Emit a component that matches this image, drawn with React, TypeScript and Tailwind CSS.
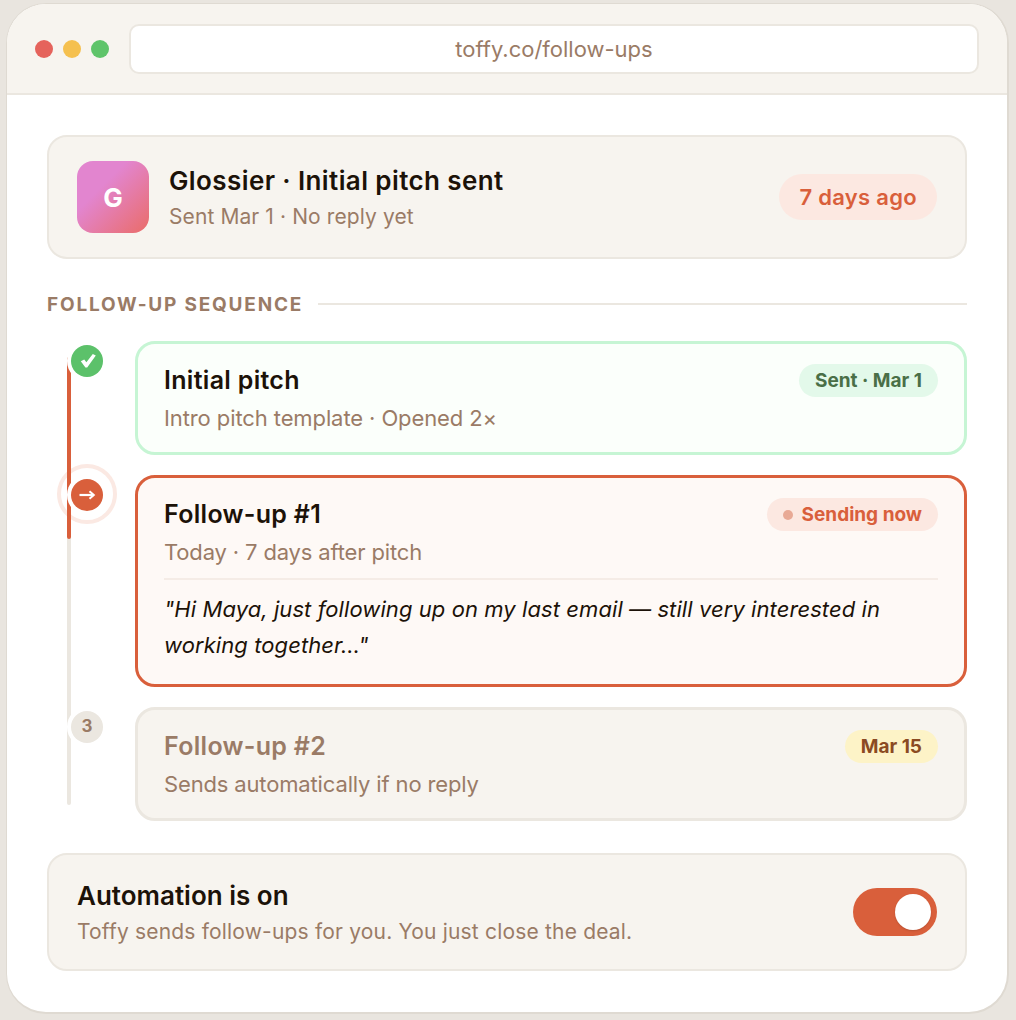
import { ReactNode } from 'react';

function Pill({ className, children }: { className: string; children: ReactNode }) {
    return (
        <span className={`flex h-[33px] items-center rounded-full px-4 text-[19px] font-bold leading-none ${className}`}>
            {children}
        </span>
    );
}

export default function App() {
    return (
        <div className="h-[1020px] overflow-hidden bg-[#e9e5df] pt-[3px] pr-[7px] pl-[6px] font-['Inter',sans-serif]">
            {/* Browser window */}
            <div className="h-[1011px] overflow-hidden rounded-[40px] border border-r-2 border-b-2 border-[#dfdad2] bg-white">
                <div className="flex items-center gap-5 border-b-2 border-[#ebe7e0] bg-[#f7f4ef] pt-5 pr-7 pb-[19px] pl-7">
                    <div className="flex items-center gap-[10px]">
                        <span className="h-[18px] w-[18px] rounded-full bg-[#e5635c]" />
                        <span className="h-[18px] w-[18px] rounded-full bg-[#f5c04f]" />
                        <span className="h-[18px] w-[18px] rounded-full bg-[#5fc46a]" />
                    </div>
                    <div className="flex h-[50px] flex-1 items-center justify-center rounded-[10px] border-2 border-[#ebe7e0] bg-white text-[22px] text-[#9a7b66]">
                        toffy.co/follow-ups
                    </div>
                </div>

                <div className="px-10 pt-10">
                    {/* Pitch summary */}
                    <div className="flex h-[124px] items-center rounded-[20px] border-2 border-[#ebe7e0] bg-[#f7f4ef] pr-7 pl-7">
                        <div className="flex h-[72px] w-[72px] items-center justify-center rounded-2xl bg-[linear-gradient(135deg,#e285cf_35%,#ea6c68)] text-[26px] font-bold text-white">
                            G
                        </div>
                        <div className="ml-5 flex-1 pt-1">
                            <div className="text-[26px] leading-[36px] font-semibold tracking-[0.4px] text-[#1c1208]">Glossier · Initial pitch sent</div>
                            <div className="text-[21px] leading-[36px] tracking-[0.1px] text-[#9a7b66]">Sent Mar 1 · No reply yet</div>
                        </div>
                        <span className="flex h-[46px] items-center rounded-full bg-[#fce8e1] px-5 text-[22px] font-semibold tracking-[0.3px] text-[#d95f3b]">
                            7 days ago
                        </span>
                    </div>

                    {/* Section label */}
                    <div className="mt-[33px] mb-[25px] flex h-6 items-center gap-[15px]">
                        <span className="pt-[2px] text-[19px] font-bold tracking-[1.8px] text-[#9a7b66]">FOLLOW-UP SEQUENCE</span>
                        <div className="h-[2px] flex-1 bg-[#ebe7e0]" />
                    </div>

                    {/* Timeline */}
                    <div className="relative flex flex-col gap-5 pl-[88px]">
                        <div className="absolute top-[123px] left-[10px] h-[60px] w-[60px] rounded-full border-4 border-[#fbe9e3]" />
                        <div className="absolute top-4 bottom-4 left-5 w-1 rounded-full bg-[#ebe7e0]" />
                        <div className="absolute top-4 left-5 h-[182px] w-1 rounded-full bg-[#d95f3b]" />

                        <div className="relative h-[114px] rounded-[20px] border-[3px] border-[#c6f5d4] bg-[#fbfffb] pt-[18px] pr-[26px] pl-[26px]">
                            <span className="absolute top-[1px] left-[-67px] h-8 w-8 rounded-full bg-[#5cc16a] shadow-[0_0_0_4px_#fff]">
                                <svg width="32" height="32" viewBox="0 0 32 32" fill="#fff">
                                    <path d="M9.8 16.2 L13.2 14.4 L15.4 17.2 L21.8 9 L24.8 10.6 L16.2 22.6 L14.4 22.6 Z" />
                                </svg>
                            </span>
                            <div className="flex items-center justify-between">
                                <span className="text-[25px] font-semibold tracking-[0.3px] text-[#1c1208]">Initial pitch</span>
                                <Pill className="bg-[#e3f9ea] text-[#4a6f47]">Sent · Mar 1</Pill>
                            </div>
                            <div className="mt-[3px] text-[22px] leading-[30px] tracking-[-0.1px] text-[#9a7b66]">Intro pitch template · Opened 2×</div>
                        </div>

                        <div className="relative h-[212px] rounded-[20px] border-[3px] border-[#d95f3b] bg-[#fef9f6] pt-[18px] pr-[26px] pl-[26px]">
                            <span className="absolute top-[1px] left-[-67px] h-8 w-8 rounded-full bg-[#d95f3b] shadow-[0_0_0_4px_#fff]">
                                <svg width="32" height="32" viewBox="0 0 32 32" fill="none" stroke="#fff" strokeWidth="2.2">
                                    <path d="M8.5 16 H22.5" />
                                    <path d="M18.5 12.2 L22.8 16 L18.5 19.8" strokeWidth="2" />
                                </svg>
                            </span>
                            <div className="flex items-center justify-between">
                                <span className="text-[25px] font-semibold tracking-[0.3px] text-[#1c1208]">Follow-up #1</span>
                                <Pill className="gap-[9px] bg-[#fce8e1] text-[#d95f3b]">
                                    <span className="h-[10px] w-[10px] rounded-full bg-[#e8a995]" />
                                    Sending now
                                </Pill>
                            </div>
                            <div className="mt-[3px] text-[22px] leading-[30px] tracking-[-0.15px] text-[#9a7b66]">Today · 7 days after pitch</div>
                            <div className="mt-[11px] border-t-2 border-[#f5ece6] pt-[11px] text-[22px] leading-[36px] tracking-[0.08px] italic text-[#1c1208]">
                                "Hi Maya, just following up on my last email — still very interested in<br />working together…"
                            </div>
                        </div>

                        <div className="relative h-[114px] rounded-[20px] border-[3px] border-[#ebe7e0] bg-[#f7f4ef] pt-[18px] pr-[26px] pl-[26px]">
                            <span className="absolute top-[1px] left-[-67px] flex h-8 w-8 items-center justify-center rounded-full bg-[#ebe7e0] text-[17px] font-bold text-[#9a7b66] shadow-[0_0_0_4px_#fff]">
                                3
                            </span>
                            <div className="flex items-center justify-between">
                                <span className="text-[25px] font-semibold tracking-[0.3px] text-[#9a7b66]">Follow-up #2</span>
                                <Pill className="bg-[#fdf3c7] text-[#8b4a22]">Mar 15</Pill>
                            </div>
                            <div className="mt-[3px] text-[22px] leading-[30px] tracking-[-0.15px] text-[#9a7b66]">Sends automatically if no reply</div>
                        </div>
                    </div>

                    {/* Automation */}
                    <div className="mt-8 flex h-[118px] items-center justify-between rounded-[20px] border-2 border-[#ebe7e0] bg-[#f7f4ef] pr-7 pl-7">
                        <div className="pt-1">
                            <div className="text-[26px] leading-[36px] font-semibold text-[#1c1208]">Automation is on</div>
                            <div className="text-[21px] leading-[36px] tracking-[0.18px] text-[#9a7b66]">Toffy sends follow-ups for you. You just close the deal.</div>
                        </div>
                        <div className="flex h-12 w-[84px] items-center justify-end rounded-full bg-[#d95f3b] p-[6px]">
                            <span className="h-9 w-9 rounded-full bg-white shadow-[0_1px_2px_rgba(0,0,0,0.15)]" />
                        </div>
                    </div>
                </div>
            </div>
        </div>
    );
}
